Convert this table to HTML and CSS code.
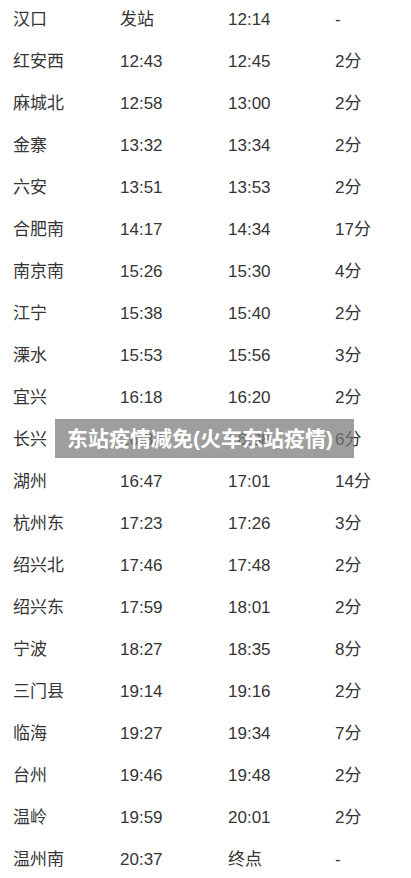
FILE: index.html
```html
<!DOCTYPE html>
<html lang="zh-CN">
  <head>
    <meta charset="UTF-8" />
    <meta name="viewport" content="width=device-width, initial-scale=1.0" />
    <title>东站疫情减免</title>
    <link rel="stylesheet" href="styles.css">
  </head>
  <body>
    <div class="page">
      <div class="timetable">
        <div class="row"><span>汉口</span><span>发站</span><span>12:14</span><span>-</span></div>
        <div class="row"><span>红安西</span><span>12:43</span><span>12:45</span><span>2分</span></div>
        <div class="row"><span>麻城北</span><span>12:58</span><span>13:00</span><span>2分</span></div>
        <div class="row"><span>金寨</span><span>13:32</span><span>13:34</span><span>2分</span></div>
        <div class="row"><span>六安</span><span>13:51</span><span>13:53</span><span>2分</span></div>
        <div class="row"><span>合肥南</span><span>14:17</span><span>14:34</span><span>17分</span></div>
        <div class="row"><span>南京南</span><span>15:26</span><span>15:30</span><span>4分</span></div>
        <div class="row"><span>江宁</span><span>15:38</span><span>15:40</span><span>2分</span></div>
        <div class="row"><span>溧水</span><span>15:53</span><span>15:56</span><span>3分</span></div>
        <div class="row"><span>宜兴</span><span>16:18</span><span>16:20</span><span>2分</span></div>
        <div class="row"><span>长兴</span><span>16:32</span><span>16:38</span><span>6分</span></div>
        <div class="row"><span>湖州</span><span>16:47</span><span>17:01</span><span>14分</span></div>
        <div class="row"><span>杭州东</span><span>17:23</span><span>17:26</span><span>3分</span></div>
        <div class="row"><span>绍兴北</span><span>17:46</span><span>17:48</span><span>2分</span></div>
        <div class="row"><span>绍兴东</span><span>17:59</span><span>18:01</span><span>2分</span></div>
        <div class="row"><span>宁波</span><span>18:27</span><span>18:35</span><span>8分</span></div>
        <div class="row"><span>三门县</span><span>19:14</span><span>19:16</span><span>2分</span></div>
        <div class="row"><span>临海</span><span>19:27</span><span>19:34</span><span>7分</span></div>
        <div class="row"><span>台州</span><span>19:46</span><span>19:48</span><span>2分</span></div>
        <div class="row"><span>温岭</span><span>19:59</span><span>20:01</span><span>2分</span></div>
        <div class="row"><span>温州南</span><span>20:37</span><span>终点</span><span>-</span></div>
      </div>
      <div class="caption">东站疫情减免(火车东站疫情)</div>
    </div>
  </body>
</html>
```

FILE: styles.css
```css
body {
  margin: 0;
  background-color: #fff;
  font-family: "Liberation Sans", "Noto Sans CJK SC", sans-serif;
}

.page {
  position: relative;
  width: 411px;
  height: 878px;
  overflow: hidden;
}

.timetable {
  margin-top: -1px;
  padding-left: 13px;
}

.row {
  display: grid;
  grid-template-columns: 107px 108px 107px auto;
  height: 42px;
  line-height: 42px;
  font-size: 17px;
  color: #353535;
}

.caption {
  position: absolute;
  top: 419px;
  left: 55px;
  width: 299px;
  height: 39px;
  padding-left: 12px;
  box-sizing: border-box;
  line-height: 39px;
  background-color: rgba(120, 120, 120, 0.72);
  color: #fff;
  font-size: 21px;
  font-weight: bold;
  white-space: nowrap;
}
```
